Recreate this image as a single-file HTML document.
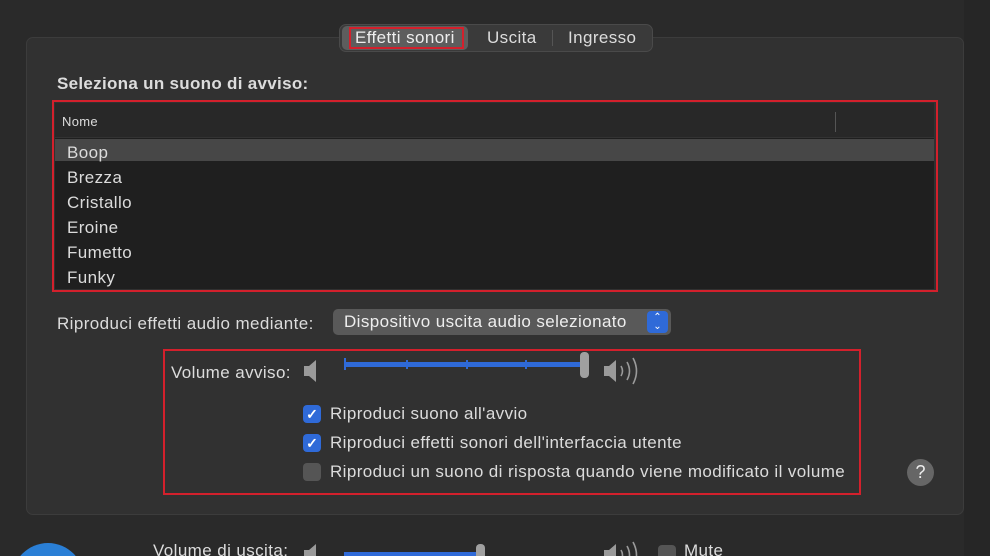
<!DOCTYPE html>
<html style="width:990px;height:556px;overflow:hidden"><head><meta charset="utf-8"><style>
*{margin:0;padding:0;box-sizing:border-box}
body{width:990px;height:556px;overflow:hidden;background:#2a2a2a;font-family:"Liberation Sans",sans-serif;color:#dcdcdc;position:relative}
#w{position:absolute;left:0;top:0;width:990px;height:556px;overflow:hidden}
.a{position:absolute}
.t{font-size:17px;letter-spacing:0.4px;white-space:nowrap}
</style></head><body><div id="w">
<div class="a" style="left:964px;top:0;width:26px;height:556px;background:#262626"></div>
<div class="a" style="left:26px;top:37px;width:938px;height:478px;background:#313131;border:1px solid #3c3c3c;border-radius:7px"></div>
<div class="a" style="left:339px;top:24px;width:314px;height:28px;background:#3a3a3a;border:1px solid #4a4a4a;border-radius:7px"></div>
<div class="a" style="left:342px;top:26px;width:126px;height:24px;background:#5d5d5d;border-radius:5px"></div>
<div class="a" style="left:349px;top:27px;width:115px;height:22px;border:2px solid #d3202c"></div>
<div class="a t" style="left:355px;top:28px;color:#eee">Effetti sonori</div>
<div class="a t" style="left:487px;top:28px">Uscita</div>
<div class="a" style="left:552px;top:30px;width:1px;height:16px;background:#555"></div>
<div class="a t" style="left:568px;top:28px">Ingresso</div>
<div class="a t" style="left:57px;top:74px;font-weight:bold;font-size:17px;letter-spacing:0.3px">Seleziona un suono di avviso:</div>
<div class="a" style="left:52px;top:100px;width:886px;height:192px;border:2px solid #d3202c"></div>
<div class="a" style="left:55px;top:103px;width:879px;height:186px;background:#1f1f1f"></div>
<div class="a" style="left:55px;top:103px;width:879px;height:35px;background:#282828;border-bottom:1px solid #333"></div>
<div class="a" style="left:835px;top:112px;width:1px;height:20px;background:#555"></div>
<div class="a t" style="left:62px;top:114px;font-size:13px;letter-spacing:0.3px">Nome</div>
<div class="a" style="left:55px;top:139px;width:879px;height:22px;background:#474747"></div>
<div class="a t" style="left:67px;top:140px;line-height:25px">Boop<br>Brezza<br>Cristallo<br>Eroine<br>Fumetto<br>Funky</div>
<div class="a t" style="left:57px;top:314px">Riproduci effetti audio mediante:</div>
<div class="a" style="left:333px;top:309px;width:338px;height:26px;background:#595959;border-radius:5px"></div>
<div class="a t" style="left:344px;top:312px;color:#eee">Dispositivo uscita audio selezionato</div>
<div class="a" style="left:647px;top:311px;width:21px;height:22px;background:#2f6ad8;border-radius:4px;color:#fff;font-size:10px;text-align:center;line-height:9px;padding-top:2px">⌃<br>⌄</div>
<div class="a" style="left:163px;top:349px;width:698px;height:146px;border:2px solid #d3202c"></div>
<div class="a t" style="left:171px;top:363px">Volume avviso:</div>
<svg class="a" style="left:300px;top:356px" width="30" height="30"><path d="M4 10h5l7-6v22l-7-6H4z" fill="#9a9a9a"/></svg>
<div class="a" style="left:344px;top:362px;width:240px;height:5px;background:#2f6ad8;border-radius:2px"></div>
<div class="a" style="left:344px;top:358px;width:2px;height:12px;background:#2f6ad8"></div>
<div class="a" style="left:406px;top:360px;width:2px;height:9px;background:#2f6ad8"></div>
<div class="a" style="left:466px;top:360px;width:2px;height:9px;background:#2f6ad8"></div>
<div class="a" style="left:525px;top:360px;width:2px;height:9px;background:#2f6ad8"></div>
<div class="a" style="left:580px;top:352px;width:9px;height:26px;background:#a0a0a0;border-radius:4px"></div>
<svg class="a" style="left:600px;top:354px" width="50" height="36"><path d="M4 12h5l7-6v22l-7-6H4z" fill="#9a9a9a"/><path d="M21 12q3 5 0 10M27 8q5 9 0 18M33 4q7 13 0 26" stroke="#9a9a9a" stroke-width="1.6" fill="none"/></svg>
<div class="a" style="left:303px;top:405px;width:18px;height:18px;background:#2f6ad8;border-radius:4px;color:#fff;font-size:14px;text-align:center;line-height:18px;font-weight:bold">✓</div>
<div class="a" style="left:303px;top:434px;width:18px;height:18px;background:#2f6ad8;border-radius:4px;color:#fff;font-size:14px;text-align:center;line-height:18px;font-weight:bold">✓</div>
<div class="a" style="left:303px;top:463px;width:18px;height:18px;background:#555;border-radius:4px"></div>
<div class="a t" style="left:330px;top:404px">Riproduci suono all'avvio</div>
<div class="a t" style="left:330px;top:433px">Riproduci effetti sonori dell'interfaccia utente</div>
<div class="a t" style="left:330px;top:462px">Riproduci un suono di risposta quando viene modificato il volume</div>
<div class="a" style="left:907px;top:459px;width:27px;height:27px;border-radius:50%;background:#666;color:#eee;font-size:18px;text-align:center;line-height:27px">?</div>
<div class="a" style="left:12px;top:543px;width:72px;height:13px;overflow:hidden"><div style="width:72px;height:72px;border-radius:50%;background:#2a7fd6"></div></div>
<div class="a t" style="left:153px;top:543px;line-height:13px;height:13px;overflow:hidden;padding-top:1px">Volume di uscita:</div>
<svg class="a" style="left:300px;top:540px" width="30" height="16"><path d="M4 10h5l7-6v22l-7-6H4z" fill="#9a9a9a"/></svg>
<div class="a" style="left:344px;top:552px;width:135px;height:4px;background:#2f6ad8"></div>
<div class="a" style="left:476px;top:544px;width:9px;height:12px;background:#a0a0a0;border-radius:4px 4px 0 0"></div>
<svg class="a" style="left:600px;top:538px" width="50" height="18"><path d="M4 12h5l7-6v22l-7-6H4z" fill="#9a9a9a"/><path d="M21 12q3 5 0 10M27 8q5 9 0 18M33 4q7 13 0 26" stroke="#9a9a9a" stroke-width="1.6" fill="none"/></svg>
<div class="a" style="left:658px;top:545px;width:18px;height:11px;background:#555;border-radius:4px 4px 0 0"></div>
<div class="a t" style="left:684px;top:543px;line-height:13px;height:13px;overflow:hidden;padding-top:1px">Mute</div>
</div></body></html>
